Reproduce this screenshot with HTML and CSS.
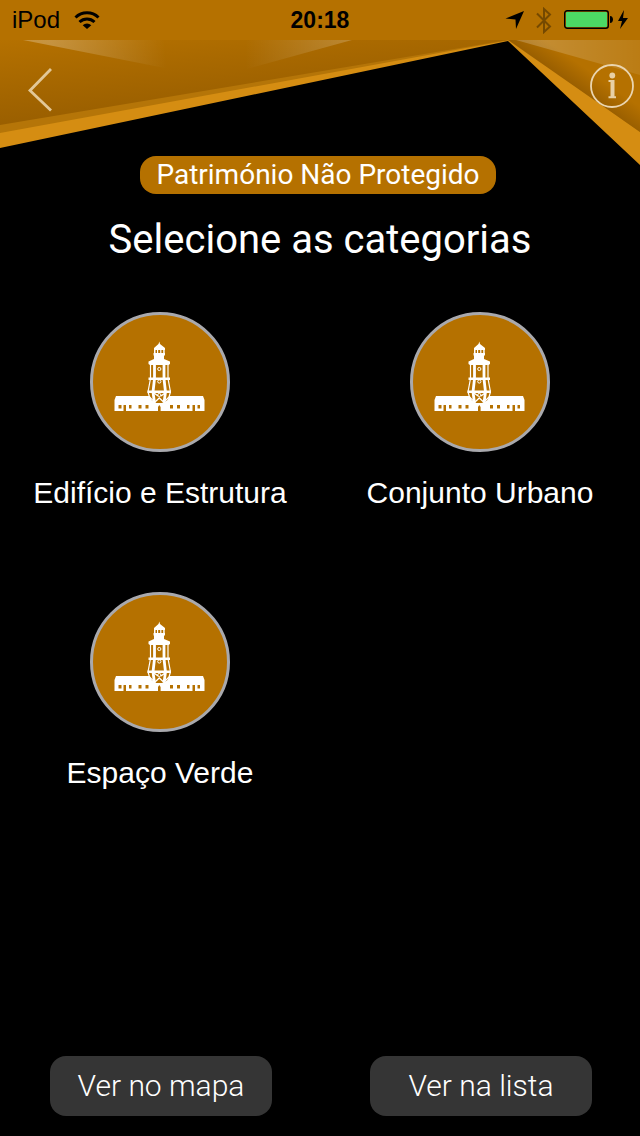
FILE: index.html
```html
<!DOCTYPE html>
<html lang="pt">
<head>
    <meta charset="utf-8">
    <meta name="viewport" content="width=device-width, initial-scale=1">
    <title>Património Não Protegido</title>
    <link rel="stylesheet" href="styles.css">
</head>
<body>
    <svg class="symbols" aria-hidden="true">
        <symbol id="lighthouse" viewBox="3 3 134 134">
            <g fill="#fff">
                <path d="M69.3 29.5l.7 2.500 5 4v2H64v-2l4.500-4z"/>
                <path d="M64 37h1.500v5H64zM67 37h1.200v5H67zM70.200 37h1.200v5h-1.200zM73.200 37h1.500v5h-1.500z"/>
                <path d="M63.500 41h11.500v2l-1 1v3l6 2.500v2.500l-1.500 1H60L58.500 52v-2.500l5.500-2.500v-3l-.5-1z"/>
                <path d="M58.500 65.500H80v2.500H58.500zM57.500 78.500H81V81H57.500z"/>
                <path d="M26 84h87l1.500 4v11h-90V88z"/>
            </g>
            <path d="M59.500 83h20l-2 5-4 3h-8l-4-3z" fill="#b57100"/>
            <g fill="none" stroke="#fff">
                <path d="M60.500 52v14.500L58 80l1.500 5 4 4M78 52v14.500L80.500 80 79 85l-4 4" stroke-width="1.200"/>
                <path d="M64.500 52v15l-1.500 13 1.500 11M74 52v15l1.500 13L74 91" stroke-width="2.800"/>
                <path d="M65 90l4.300-4 4.300 4M64 81l4 3M75 81l-4 3" stroke-width="1.300"/>
                <circle cx="69.300" cy="57" r="1.600"/>
                <circle cx="69.300" cy="69.500" r="1.600"/>
                <circle cx="69.300" cy="83" r="1.600"/>
            </g>
            <path d="M28.500 93h3v3.500h-3zM33.500 93H36v6h-2.500zM39 93h2.500v3.500H39zM48.500 93h3v3.500h-3zM55.500 93h3v3.500h-3zM68 99v-4l1.300-2 1.300 2v4zM80 93h3v3.500h-3zM87 93h3v3.500h-3zM97 93h2.500v3.500H97zM102.500 93h2.500v6h-2.500zM107.500 93h2.500v3.500h-2.500z" fill="#b57100"/>
        </symbol>
    </svg>

    <header class="header">
        <svg class="banner" viewBox="0 0 640 170" preserveAspectRatio="none" aria-hidden="true">
            <defs>
                <linearGradient id="shade" gradientUnits="userSpaceOnUse" x1="0" y1="40" x2="8" y2="125">
                    <stop offset="0" stop-color="#b57100"/>
                    <stop offset="1" stop-color="#9a5f00"/>
                </linearGradient>
                <linearGradient id="shadeRight" gradientUnits="userSpaceOnUse" x1="588" y1="70" x2="576" y2="87">
                    <stop offset="0" stop-color="#b57100"/>
                    <stop offset="1" stop-color="#9a5f00"/>
                </linearGradient>
                <linearGradient id="glowLeft" gradientUnits="userSpaceOnUse" x1="50" y1="48" x2="165" y2="40">
                    <stop offset="0" stop-color="#fff" stop-opacity=".25"/>
                    <stop offset="1" stop-color="#fff" stop-opacity="0"/>
                </linearGradient>
                <linearGradient id="glowMid" gradientUnits="userSpaceOnUse" x1="245" y1="50" x2="352" y2="50">
                    <stop offset="0" stop-color="#fff" stop-opacity="0"/>
                    <stop offset="1" stop-color="#fff" stop-opacity=".2"/>
                </linearGradient>
                <linearGradient id="glowRight" gradientUnits="userSpaceOnUse" x1="540" y1="50" x2="640" y2="50">
                    <stop offset="0" stop-color="#fff" stop-opacity=".2"/>
                    <stop offset="1" stop-color="#fff" stop-opacity=".08"/>
                </linearGradient>
            </defs>
            <path d="M0 0H640V165L508 41 0 148z" fill="#d58d12"/>
            <path d="M0 0H640V132L510 40 0 133z" fill="#b57508"/>
            <path d="M0 0H508V40L0 125z" fill="url(#shade)"/>
            <path d="M508 40H640V132z" fill="url(#shadeRight)"/>
            <path d="M0 0H640V40H0z" fill="#b57100"/>
            <path d="M23 40H200V75z" fill="url(#glowLeft)"/>
            <path d="M225 75V40H352z" fill="url(#glowMid)"/>
            <path d="M516 40H640V75z" fill="url(#glowRight)"/>
        </svg>

        <div class="status-bar">
            <div class="status-left">
                <span>iPod</span>
                <svg width="26" height="18" viewBox="0 0 26 18" aria-hidden="true">
                    <g fill="none" stroke="#000" stroke-width="3">
                        <path d="M1.500 6.500a16.500 16.500 0 0 1 23 0"/>
                        <path d="M5.500 11a11 11 0 0 1 15 0"/>
                    </g>
                    <path d="M8.700 14.200a6.200 6.200 0 0 1 8.600 0L13 18z"/>
                </svg>
            </div>
            <div class="clock">20:18</div>
            <div class="status-right">
                <svg width="19" height="18" viewBox="0 0 19 18" aria-hidden="true">
                    <path d="M19 0L11 18l-.5-9.500L.5 7.500z"/>
                </svg>
                <svg width="16" height="27" viewBox="0 0 16 27" aria-hidden="true">
                    <path d="M1 6.500l13 13L8 25V2l6 5.500-13 13" fill="none" stroke="#754900" stroke-width="2"/>
                </svg>
                <svg width="64" height="20" viewBox="0 0 64 20" aria-hidden="true">
                    <rect x=".7" y=".7" width="43.600" height="17.600" rx="2.500" fill="none" stroke="#000" stroke-width="1.400"/>
                    <rect x="2" y="2" width="41" height="15" rx="1" fill="#4cd964"/>
                    <path d="M46 6c4 0 4 7 0 7z"/>
                    <path d="M60 0l-6 11h4l-2 8 8-11h-5z"/>
                </svg>
            </div>
        </div>

        <nav class="nav">
            <a class="back" href="#" aria-label="Voltar">
                <svg width="24" height="44" viewBox="0 0 24 44">
                    <path d="M23 1L2 22.500l21 20" fill="none" stroke="#e2c898" stroke-width="2.800"/>
                </svg>
            </a>
            <a class="info" href="#" aria-label="Informação">
                <svg width="44" height="44" viewBox="0 0 44 44">
                    <circle cx="22" cy="22" r="21" fill="none" stroke="#ead5b0" stroke-width="1.800"/>
                    <circle cx="22.300" cy="11.500" r="2.900" fill="#e8d0a5"/>
                    <path d="M18.500 16h6v16.300H26v2h-7.500v-2h2V18h-2z" fill="#e8d0a5"/>
                </svg>
            </a>
        </nav>
    </header>

    <main class="content">
        <div class="badge">Património Não Protegido</div>
        <h1>Selecione as categorias</h1>

        <div class="categories">
            <button class="category" type="button">
                <svg class="category-icon"><use href="#lighthouse"/></svg>
                <span>Edifício e Estrutura</span>
            </button>
            <button class="category" type="button">
                <svg class="category-icon"><use href="#lighthouse"/></svg>
                <span>Conjunto Urbano</span>
            </button>
            <button class="category" type="button">
                <svg class="category-icon"><use href="#lighthouse"/></svg>
                <span>Espaço Verde</span>
            </button>
        </div>
    </main>

    <footer class="actions">
        <button class="action" type="button">Ver no mapa</button>
        <button class="action" type="button">Ver na lista</button>
    </footer>
</body>
</html>
```
FILE: styles.css
```css
* {
    box-sizing: border-box;
}
body {
    display: flex;
    flex-direction: column;
    min-height: 100vh;
    margin: 0;
    background-color: #000;
    color: #fff;
    font-family: Roboto, sans-serif;
}
button {
    padding: 0;
    border: none;
    color: inherit;
    cursor: pointer;
}
svg {
    display: block;
}
.symbols {
    position: absolute;
    width: 0;
    height: 0;
}

/* header */
.header {
    position: relative;
}
.banner {
    position: absolute;
    top: 0;
    left: 0;
    z-index: -1;
    width: 100%;
    height: 170px;
}
.status-bar {
    display: grid;
    grid-template-columns: 1fr auto 1fr;
    align-items: center;
    height: 40px;
    padding: 0 12px;
    color: #000;
    font-family: "Liberation Sans", sans-serif;
    font-size: 24px;
}
.status-left,
.status-right {
    display: flex;
    align-items: center;
    gap: 12px;
}
.status-left {
    gap: 14px;
}
.status-right {
    justify-content: flex-end;
}
.clock {
    font-size: 23px;
    font-weight: bold;
}
.nav {
    display: flex;
    justify-content: space-between;
    padding: 24px 6px 0 28px;
}
.back {
    padding-top: 4px;
}

/* categories */
.content {
    display: flex;
    flex: 1;
    flex-direction: column;
    align-items: center;
    padding-top: 44px;
}
.badge {
    margin-right: 4px;
    padding: 0 16px;
    border-radius: 16px;
    background-color: #b57100;
    font-size: 28px;
    line-height: 38px;
}
h1 {
    margin: 20px 0 0;
    font-size: 40px;
    font-weight: 400;
    line-height: 52px;
}
.categories {
    display: grid;
    grid-template-columns: 1fr 1fr;
    grid-auto-rows: 280px;
    width: 100%;
    padding-top: 46px;
}
.category {
    display: flex;
    flex-direction: column;
    align-items: center;
    gap: 24px;
    background: none;
    font-family: "Liberation Sans", sans-serif;
    font-size: 30px;
    line-height: 34px;
}
.category-icon {
    width: 140px;
    height: 140px;
    border: 3px solid #a9a9ad;
    border-radius: 50%;
    background-color: #b57100;
}

/* bottom buttons */
.actions {
    display: flex;
    justify-content: space-between;
    padding: 20px 48px 20px 50px;
}
.action {
    width: 222px;
    height: 60px;
    padding-bottom: 2px;
    border-radius: 16px;
    background-color: #353535;
    font-family: Roboto, sans-serif;
    font-size: 30px;
    font-weight: 300;
}
```
